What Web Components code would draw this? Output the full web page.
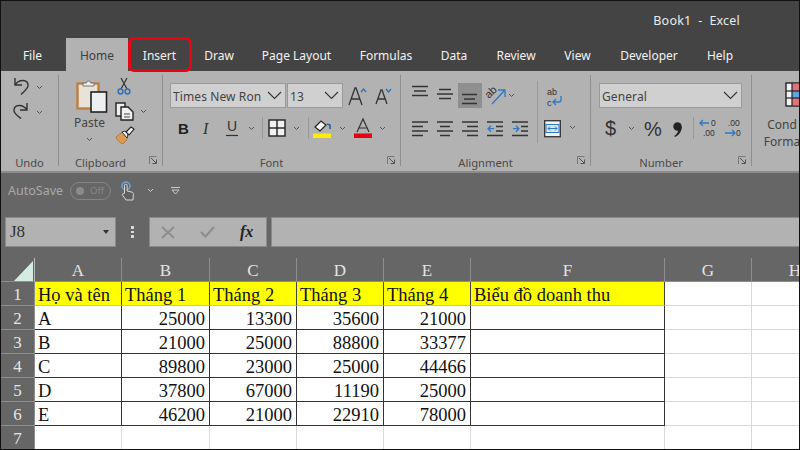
<!DOCTYPE html>
<html><head><meta charset="utf-8"><style>
html,body{margin:0;padding:0;background:#000}
body{width:800px;height:450px;overflow:hidden}
</style></head><body>
<x-app>
  <x-titlebar>Book1&nbsp; -&nbsp; Excel</x-titlebar>
  <x-tabs>
    <x-tab w="47" style="margin-left:8px">File</x-tab>
    <x-tab w="62" active style="margin-left:10px">Home</x-tab>
    <x-tab w="63" outlined>Insert</x-tab>
    <x-tab w="56">Draw</x-tab>
    <x-tab w="99">Page Layout</x-tab>
    <x-tab w="80">Formulas</x-tab>
    <x-tab w="56">Data</x-tab>
    <x-tab w="68">Review</x-tab>
    <x-tab w="55">View</x-tab>
    <x-tab w="88">Developer</x-tab>
    <x-tab w="54">Help</x-tab>
  </x-tabs>
  <x-ribbon>
    <x-group label="Undo" w="57" nolaunch>
      <x-row pl="12" pt="6"><x-ic n="undo" w="16" h="20"></x-ic><x-chev ml="7"></x-chev></x-row>
      <x-row pl="12" pt="5"><x-ic n="redo" w="16" h="20"></x-ic><x-chev ml="7"></x-chev></x-row>
    </x-group>
    <x-sep></x-sep>
    <x-group label="Clipboard" w="103">
      <x-row pl="15" pt="0" top>
        <x-stack style="width:36px;padding-top:8px">
          <x-ic n="paste" w="32" h="34"></x-ic>
          <x-lab style="margin:1px 5px 0 0">Paste</x-lab>
          <x-chev style="margin:6px 5px 0 0"></x-chev>
        </x-stack>
        <x-stack style="width:28px;margin-left:5px;padding-top:6px;align-items:flex-start">
          <x-ic n="cut" w="14" h="18" style="margin-left:2px"></x-ic>
          <x-row pt="7"><x-ic n="copy" w="19" h="18"></x-ic><x-chev ml="6"></x-chev></x-row>
          <x-ic n="brush" w="18" h="18" style="margin:7px 0 0 1px"></x-ic>
        </x-stack>
      </x-row>
    </x-group>
    <x-sep></x-sep>
    <x-group label="Font" w="237">
      <x-row pl="7" pt="12">
        <x-select w="116">Times New Ron</x-select>
        <x-select w="56" ml="1">13</x-select>
        <x-ic n="growA" w="18" h="20" style="margin-left:5px"></x-ic>
        <x-ic n="shrinkA" w="16" h="18" style="margin-left:9px"></x-ic>
      </x-row>
      <x-row pl="15" pt="9">
        <x-ic n="b" w="10" h="18"></x-ic>
        <x-ic n="i" w="10" h="18" style="margin-left:14px"></x-ic>
        <x-ic n="u" w="12" h="20" style="margin-left:14px"></x-ic>
        <x-chev ml="10"></x-chev>
        <x-bar ml="7"></x-bar>
        <x-ic n="borders" w="18" h="18" style="margin-left:5px"></x-ic>
        <x-chev ml="7"></x-chev>
        <x-bar ml="8"></x-bar>
        <x-ic n="fill" w="19" h="20" style="margin-left:4px"></x-ic>
        <x-chev ml="7"></x-chev>
        <x-ic n="color" w="18" h="20" style="margin-left:8px"></x-ic>
        <x-chev ml="7"></x-chev>
      </x-row>
    </x-group>
    <x-sep></x-sep>
    <x-group label="Alignment" w="189">
      <x-row pl="11" pt="10" top>
        <x-stack style="width:125px;padding-top:2px;align-items:flex-start">
          <x-row>
            <x-ic n="atop" w="17" h="25"></x-ic>
            <x-ic n="amid" w="17" h="25" style="margin-left:8px"></x-ic>
            <x-ic n="abot" w="24" h="25" style="margin-left:4px"></x-ic>
            <x-ic n="orient" w="20" h="22" style="margin-left:4px"></x-ic>
            <x-chev ml="2"></x-chev>
          </x-row>
          <x-row pt="9">
            <x-ic n="left" w="17" h="20"></x-ic>
            <x-ic n="center" w="17" h="20" style="margin-left:8px"></x-ic>
            <x-ic n="right" w="17" h="20" style="margin-left:8px"></x-ic>
            <x-ic n="outd" w="17" h="20" style="margin-left:8px"></x-ic>
            <x-ic n="ind" w="17" h="20" style="margin-left:8px"></x-ic>
          </x-row>
        </x-stack>
        <x-bar tall></x-bar>
        <x-stack style="padding-top:5px;align-items:flex-start">
          <x-ic n="wrap" w="17" h="20" style="margin-left:8px"></x-ic>
          <x-row pl="6" pt="11"><x-ic n="merge" w="17" h="20"></x-ic><x-chev ml="8"></x-chev></x-row>
        </x-stack>
      </x-row>
    </x-group>
    <x-sep></x-sep>
    <x-group label="Number" w="160">
      <x-row pl="8" pt="12"><x-select w="143">General</x-select></x-row>
      <x-row pl="14" pt="9">
        <x-ic n="dollar" w="11" h="20"></x-ic>
        <x-chev ml="12"></x-chev>
        <x-ic n="pct" w="18" h="20" style="margin-left:9px"></x-ic>
        <x-ic n="comma" w="10" h="20" style="margin-left:11px"></x-ic>
        <x-bar ml="10"></x-bar>
        <x-ic n="incd" w="18" h="20" style="margin-left:5px"></x-ic>
        <x-ic n="decd" w="18" h="20" style="margin-left:7px"></x-ic>
      </x-row>
    </x-group>
    <x-sep></x-sep>
    <x-styles>
      <x-ic n="cond" w="16" h="25"></x-ic>
      <x-lab>Cond</x-lab><x-lab>Forma</x-lab>
    </x-styles>
  </x-ribbon>
  <x-qat></x-qat>
  <x-formula name="J8"></x-formula>
  <x-sheet></x-sheet>
</x-app>
<script>
const line=(x1,y1,x2,y2,c='#333',w=1.5)=>`<line x1="${x1}" y1="${y1}" x2="${x2}" y2="${y2}" stroke="${c}" stroke-width="${w}"/>`;
const lines=(arr,c='#333',w=1.5)=>arr.map(a=>line(...a,c,w)).join('');
const ICONS={
 undo:`<path d="M2 1v7h7M2 8C6 2 15 2 15 8.5c0 3-3 5-7 9" fill="none" stroke="#333" stroke-width="1.4"/>`,
 redo:`<path d="M14 1v7H7M14 8C10 2 1 2 1 8.5c0 3 3 5 7 8" fill="none" stroke="#333" stroke-width="1.4"/>`,
 paste:`<rect x="1.5" y="4.5" width="21" height="25" fill="#e9e2d9" stroke="#bd7f42" stroke-width="2.4"/><path d="M7 7V4h3.5a2 2 0 0 1 4 0H18v3z" fill="#efefef" stroke="#777" stroke-width="1"/><rect x="15" y="13" width="15.5" height="20" fill="#edf0f0" stroke="#222" stroke-width="1.6"/>`,
 cut:`<path d="M4 1l6 11M10 1L4 12" fill="none" stroke="#333" stroke-width="1.2"/><circle cx="3.5" cy="14.5" r="2.4" fill="none" stroke="#2f6fb3" stroke-width="1.5"/><circle cx="10.5" cy="14.5" r="2.4" fill="none" stroke="#2f6fb3" stroke-width="1.5"/>`,
 copy:`<rect x="1" y="1" width="9" height="13" fill="#f0f0f0" stroke="#222" stroke-width="1.4"/><path d="M6 5h7l5 5v8H6z" fill="#f0f0f0" stroke="#222" stroke-width="1.4"/>`+lines([[9,12,15,12],[9,15,15,15]],'#444',1),
 brush:`<path d="M0 10l6-5 6 6-5 6c-3-1-6-4-7-7z" fill="#d99a56" stroke="#b3702f" stroke-width=".8"/><path d="M6 5l3-1 3 3-1 4z" fill="#f2f2f2" stroke="#333"/><path d="M10 5l5-5 3 2-5 6z" fill="#f2f2f2" stroke="#222" stroke-width="1.1"/>`,
 growA:`<path d="M1 19L7 2h1l6 17M3.500 13h8" fill="none" stroke="#333" stroke-width="1.300"/><path d="M13 6l2.500-3L18 6" fill="none" stroke="#2f6fb3" stroke-width="1.300"/>`,
 shrinkA:`<path d="M1 17L6 3h1l5 14M3 12h7" fill="none" stroke="#333" stroke-width="1.300"/><path d="M11 2l2.500 3L16 2" fill="none" stroke="#2f6fb3" stroke-width="1.300"/>`,
 b:`<text x="0" y="15" font-family="Liberation Sans" font-weight="700" font-size="15" fill="#222">B</text>`,
 i:`<text x="1" y="15" font-family="Liberation Serif" font-style="italic" font-size="16" fill="#333">I</text>`,
 u:`<text x="1" y="13" font-family="Liberation Sans" font-size="14" fill="#333">U</text>`+line(0,17.5,12,17.5,'#333',1.2),
 borders:`<rect x="1" y="1" width="16" height="16" fill="#f2f2f2" stroke="#222" stroke-width="1.4"/>`+lines([[9,1,9,17],[1,9,17,9]],'#222',1.4),
 fill:`<path d="M2 9l6-6 5 4-6 6z" fill="#f5f5f5" stroke="#222" stroke-width="1.2"/><path d="M14 6l3 1v4" fill="none" stroke="#2a5f9e" stroke-width="1.6"/><rect x="0" y="15.500" width="18" height="4.500" fill="#ffee00"/>`,
 color:`<path d="M3 14L9 1l6 13M5 10h8" fill="none" stroke="#333" stroke-width="1.2"/><rect x="0" y="15.500" width="18" height="4.500" fill="#e8000f"/>`,
 atop:lines([[0,3.500,16,3.500],[2,8,14,8],[0,12.500,16,12.500]]),
 amid:lines([[2,6.500,14,6.500],[0,11,16,11],[2,15.500,14,15.500]]),
 abot:`<rect width="24" height="25" fill="#8f8f8f"/>`+lines([[4,11.500,19,11.500],[6,16,17,16],[4,20.500,19,20.500]]),
 orient:`<text transform="translate(3,14) rotate(-45)" font-family="Liberation Sans" font-size="11" fill="#333">ab</text><path d="M6 19L18 6M12 5h7v7" fill="none" stroke="#2f78c4" stroke-width="1.3"/>`,
 wrap:`<text x="1" y="9" font-family="Liberation Sans" font-size="9" fill="#333">ab</text><text x="1" y="19.500" font-family="Liberation Sans" font-size="9" fill="#333">c</text><path d="M15 10v4a2 2 0 0 1-2 2H8M10 13l-3 3 3 3" fill="none" stroke="#2f78c4" stroke-width="1.3"/>`,
 left:lines([[0,5,16,5],[0,9.500,11,9.500],[0,14,16,14],[0,18.500,11,18.500]]),
 center:lines([[0,5,16,5],[3,9.500,13,9.500],[0,14,16,14],[3,18.500,13,18.500]]),
 right:lines([[0,5,16,5],[5,9.500,16,9.500],[0,14,16,14],[5,18.500,16,18.500]]),
 outd:lines([[0,5,16,5],[9,9.500,16,9.500],[9,14,16,14],[0,18.500,16,18.500]])+`<path d="M7 11.700H1M4 8.700l-3 3 3 3" fill="none" stroke="#2f78c4" stroke-width="1.300"/>`,
 ind:lines([[0,5,16,5],[9,9.500,16,9.500],[9,14,16,14],[0,18.500,16,18.500]])+`<path d="M1 11.700h6M4 8.700l3 3-3 3" fill="none" stroke="#2f78c4" stroke-width="1.300"/>`,
 merge:`<rect x="0.700" y="3.700" width="15.600" height="16" fill="#eef2f4" stroke="#333" stroke-width="1.300"/><rect x="2" y="7.500" width="13" height="8" fill="#dce6ef" stroke="#2f78c4"/><path d="M4 11.500h9M6 9.500l-2 2 2 2M11 9.500l2 2-2 2" fill="none" stroke="#2f78c4" stroke-width="1"/>`,
 dollar:`<text x="0" y="17" font-family="Liberation Sans" font-size="20" fill="#333">$</text>`,
 pct:`<text x="0" y="18" font-family="Liberation Sans" font-size="20" fill="#333" textLength="18">%</text>`,
 comma:`<circle cx="4.500" cy="8.500" r="4.200" fill="#222"/><path d="M8.700 8.500c.3 4.500-2.500 8.500-6.700 10.500l-.7-1c2.500-1.700 3.700-3.500 3.700-5.500z" fill="#222"/>`,
 incd:`<text x="12" y="7.500" font-family="Liberation Sans" font-size="8.500" fill="#333">0</text><text x="4" y="18" font-family="Liberation Sans" font-size="8.500" fill="#333">.00</text><path d="M10 5H1M4 2L1 5l3 3" fill="none" stroke="#2f78c4" stroke-width="1.300"/>`,
 decd:`<text x="4" y="7.500" font-family="Liberation Sans" font-size="8.500" fill="#333">.00</text><text x="12" y="18" font-family="Liberation Sans" font-size="8.500" fill="#333">0</text><path d="M1 15h10M8 12l3 3-3 3" fill="none" stroke="#2f78c4" stroke-width="1.300"/>`,
 cond:`<rect x="1" y="1" width="15" height="23" fill="#f3f3f3" stroke="#222" stroke-width="1.400"/><rect x="7" y="2" width="9" height="7" fill="#e0737a"/><rect x="7" y="9" width="9" height="7" fill="#5aa6e0"/><rect x="7" y="16" width="9" height="7" fill="#e0737a"/>`+lines([[1,9,16,9],[1,16,16,16],[7,1,7,24]],'#222',1.2)
};
const def=(n,css,html,init)=>customElements.define(n,class extends HTMLElement{
  connectedCallback(){if(this.shadowRoot)return;const s=this.attachShadow({mode:'open'});
    s.innerHTML=`<style>${css}</style>`+(typeof html==='function'?html(this):html);if(init)init(this,s);}
});
const UI='"Noto Sans","Open Sans",sans-serif';
def('x-app',`:host{display:flex;flex-direction:column;box-sizing:border-box;width:800px;height:450px;border:1px solid #111;background:#666;overflow:hidden;font-family:${UI}}`,`<slot></slot>`);
def('x-titlebar',`:host{display:flex;align-items:center;justify-content:flex-end;height:37px;flex:none;background:#444;color:#ececec;font-size:12.500px;letter-spacing:.2px;padding:2px 59px 0 0;box-sizing:border-box;white-space:pre}`,`<slot></slot>`);
def('x-tabs',`:host{display:flex;height:33px;flex:none;background:#444}`,`<slot></slot>`);
def('x-tab',`:host{display:flex;align-items:center;justify-content:center;box-sizing:border-box;flex:none;color:#f2f2f2;font-size:12px;position:relative;padding-top:1px}
:host([active]){background:#b2b2b2;color:#3e3e3e}
:host([outlined])::after{content:"";position:absolute;left:0;top:-1px;right:-1px;bottom:-1px;border:3px solid #e30613;border-radius:6px;}`,`<slot></slot>`,(e)=>{e.style.width=e.getAttribute('w')+'px'});
def('x-ribbon',`:host{display:flex;height:100px;flex:none;background:#b2b2b2;border-bottom:2px solid #8c8c8c;box-sizing:content-box;overflow:hidden}`,`<slot></slot>`);
def('x-sep',`:host{display:block;flex:none;width:1px;height:91px;margin-top:4px;background:#8d8d8d}`,``);
def('x-group',`:host{display:flex;flex-direction:column;flex:none;height:100px;box-sizing:border-box}
.b{flex:1;min-height:0;display:flex;flex-direction:column}
.f{flex:none;height:19px;display:flex;align-items:center;box-sizing:border-box;padding-top:1px}
.l{flex:1;text-align:center;font-size:11.200px;color:#4a4a4a}
.d{flex:none;width:20px;height:12px;padding-left:7px;box-sizing:border-box}
svg{display:block}`,e=>`<div class="b"><slot></slot></div><div class="f"><div class="l">${e.getAttribute('label')}</div>${e.hasAttribute('nolaunch')?'':`<div class="d"><svg width="8" height="9" viewBox="0 0 8 9"><path d="M.5 8V.5H7.500" fill="none" stroke="#777"/><path d="M2 2l5 5M3.500 7.500H7.500V3.500" fill="none" stroke="#555"/></svg></div>`}</div>`,e=>{e.style.width=e.getAttribute('w')+'px'});
def('x-row',`:host{display:flex;align-items:center;flex:none}:host([top]){align-items:flex-start}`,`<slot></slot>`,e=>{e.style.paddingLeft=(e.getAttribute('pl')||0)+'px';e.style.paddingTop=(e.getAttribute('pt')||0)+'px'});
def('x-stack',`:host{display:flex;flex-direction:column;align-items:center;flex:none;box-sizing:border-box}`,`<slot></slot>`);
def('x-lab',`:host{display:block;font-size:12px;line-height:17px;color:#444;white-space:nowrap}`,`<slot></slot>`);
def('x-ic',`:host{display:block;flex:none}svg{display:block;overflow:visible}`,e=>{const w=e.getAttribute('w'),h=e.getAttribute('h');return `<svg width="${w}" height="${h}" viewBox="0 0 ${w} ${h}">${ICONS[e.getAttribute('n')]}</svg>`});
def('x-chev',`:host{display:block;flex:none;width:7px;height:5px}svg{display:block}`,`<svg width="7" height="5" viewBox="0 0 7 5"><path d="M1 1l2.500 2.500L6 1" fill="none" stroke="#555" stroke-width="1"/></svg>`,e=>{if(e.hasAttribute('ml'))e.style.marginLeft=e.getAttribute('ml')+'px'});
def('x-bar',`:host{display:block;flex:none;width:1px;height:22px;background:#9a9a9a}:host([tall]){height:62px}`,``,e=>{e.style.marginLeft=(e.getAttribute('ml')||0)+'px'});
def('x-select',`:host{display:flex;align-items:center;flex:none;box-sizing:border-box;height:25px;background:#d0d0d0;border:1px solid #9a9a9a;font-size:12px;color:#444;padding:1px 0 0 2px;overflow:hidden;white-space:nowrap}
.t{flex:1;overflow:hidden;letter-spacing:.1px}svg{flex:none;margin:-1px 3px 0 2px;display:block}`,`<div class="t"><slot></slot></div><svg width="15" height="9" viewBox="0 0 15 9"><path d="M1 1l6.500 6.500L14 1" fill="none" stroke="#333" stroke-width="1.100"/></svg>`,e=>{e.style.width=e.getAttribute('w')+'px';if(e.hasAttribute('ml'))e.style.marginLeft=e.getAttribute('ml')+'px'});
def('x-styles',`:host{display:flex;flex-direction:column;align-items:center;flex:none;padding:11px 0 0 10px;box-sizing:content-box;width:40px}
::slotted(x-ic){margin-left:22px;margin-bottom:9px}`,`<slot></slot>`);
def('x-qat',`:host{display:flex;align-items:center;height:35px;flex:none;box-sizing:border-box;padding:0 0 0 7px;color:#a9a9a9;font-size:12.500px}
.p{display:flex;align-items:center;box-sizing:border-box;width:41px;height:18px;border:1px solid #858585;border-radius:9px;margin-left:7px;padding-left:5px;font-size:9.500px;color:#888}
.d{width:8px;height:8px;border-radius:50%;background:#8b8b8b;margin-right:6px}
svg{display:block;flex:none}`,`<span>AutoSave</span><div class="p"><div class="d"></div>Off</div>
<svg style="margin-left:10px" width="15" height="20" viewBox="0 0 15 20"><circle cx="5" cy="5" r="4" fill="none" stroke="#6fa6d8" stroke-width="1.500"/><path d="M3.500 12V4.500a1.300 1.300 0 0 1 2.600 0V10l5 1.200c1 .3 1.400 1 1.300 2L12 19H5l-3.500-5c-.5-1 .5-2 1.500-1.200z" fill="#5f5f5f" stroke="#d8d8d8" stroke-width="1"/></svg>
<svg style="margin-left:11px" width="7" height="5" viewBox="0 0 7 5"><path d="M1 1l2.500 2.500L6 1" fill="none" stroke="#cfcfcf"/></svg>
<svg style="margin-left:17px" width="9" height="8" viewBox="0 0 9 8"><path d="M0 .5h9M1 3h7L4.500 7z" fill="none" stroke="#c8c8c8"/></svg>`);
def('x-formula',`:host{display:flex;height:30px;flex:none;margin-top:9px;box-sizing:border-box;padding-left:4px;align-items:stretch}
.n,.b,.i{background:#b2b2b2;box-sizing:border-box;border:1px solid #8a8a8a}
.n{width:111px;display:flex;align-items:center;padding:0 6px 0 4px;font:17px "Liberation Serif",serif;color:#333;justify-content:space-between}
.n i{display:block;border:3.500px solid transparent;border-top:4px solid #333;border-bottom:0}
.d{width:33px;display:flex;flex-direction:column;align-items:center;justify-content:center;gap:2px}
.d i{display:block;width:2.500px;height:2.500px;background:#d8d8d8}
.b{width:118px;display:flex;align-items:center;padding-left:11px}
.b svg{display:block;flex:none}
.fx{font:italic 700 16px "Liberation Serif",serif;color:#222;margin-left:25px}
.i{flex:1;margin-left:4px;border-right:0}`,e=>`<div class="n">${e.getAttribute('name')}<i></i></div><div class="d"><i></i><i></i><i></i></div>
<div class="b"><svg width="14" height="13" viewBox="0 0 14 13"><path d="M1 1l12 11M13 1L1 12" fill="none" stroke="#8c8c8c" stroke-width="1.800"/></svg><svg style="margin-left:25px" width="15" height="12" viewBox="0 0 15 12"><path d="M1 6l4.500 4.500L14 1" fill="none" stroke="#8c8c8c" stroke-width="2"/></svg><span class="fx">fx</span></div><div class="i"></div>`);
const cols=[87,88,87,87,87,194,87,87];
const data=[['Họ và tên','Tháng 1','Tháng 2','Tháng 3','Tháng 4','Biểu đồ doanh thu'],
['A',25000,13300,35600,21000,''],['B',21000,25000,88800,33377,''],['C',89800,23000,25000,44466,''],['D',37800,67000,11190,25000,''],['E',46200,21000,22910,78000,'']];
def('x-sheet',`:host{display:grid;flex:none;margin-top:11px;height:191px;width:798px;grid-template-columns:34px ${cols.map(c=>c+'px').join(' ')};grid-template-rows:24px repeat(7,24px);font-family:"Liberation Serif",serif;overflow:hidden}
.h{background:#666;color:#e4e4e4;font-size:17px;display:flex;align-items:center;justify-content:center;box-sizing:border-box;border-right:1px solid #8e8e8e;line-height:1;padding-top:2px}
.r{background:#666;color:#e4e4e4;font-size:17px;display:flex;align-items:center;justify-content:center;box-sizing:border-box;border-bottom:1px solid #8e8e8e;border-right:1px solid #8e8e8e;padding-top:3px}
.h.c{border-bottom:1px solid #8e8e8e;border-right:1px solid #bbb;position:relative}
.c svg{position:absolute;left:13px;top:3px}
.h.n{border-bottom:1px solid #8e8e8e}
.x{background:#fff;box-sizing:border-box;border-right:1px solid #d9d9d9;border-bottom:1px solid #d9d9d9;font-size:18.500px;color:#111;display:flex;align-items:center;padding:4px 3px 0 3px;white-space:nowrap;overflow:visible;line-height:1}
.x.y{background:#ff0;border-right:1px solid #444;border-bottom:1px solid #c9c98a}
.x.t{border-right:1px solid #333;border-bottom:1px solid #333}
.x.v{justify-content:flex-end;padding-right:4px}`,()=>{
 let h=`<div class="h c"><svg width="19" height="20" viewBox="0 0 19 20"><path d="M19 0V20H0z" fill="#d6ece0"/></svg></div>`;
 'ABCDEFGH'.split('').forEach(c=>h+=`<div class="h n">${c}</div>`);
 for(let r=0;r<7;r++){h+=`<div class="r">${r+1}</div>`;
  for(let c=0;c<8;c++){const v=data[r]&&data[r][c]!==undefined?data[r][c]:'';
   const inT=r<6&&c<6;let k='x'+(r===0&&c<6?' y':'')+(inT&&r>0?' t':'')+(typeof v==='number'?' v':'');
   h+=`<div class="${k}">${v}</div>`;}}
 return h;});
</script>
</body></html>
